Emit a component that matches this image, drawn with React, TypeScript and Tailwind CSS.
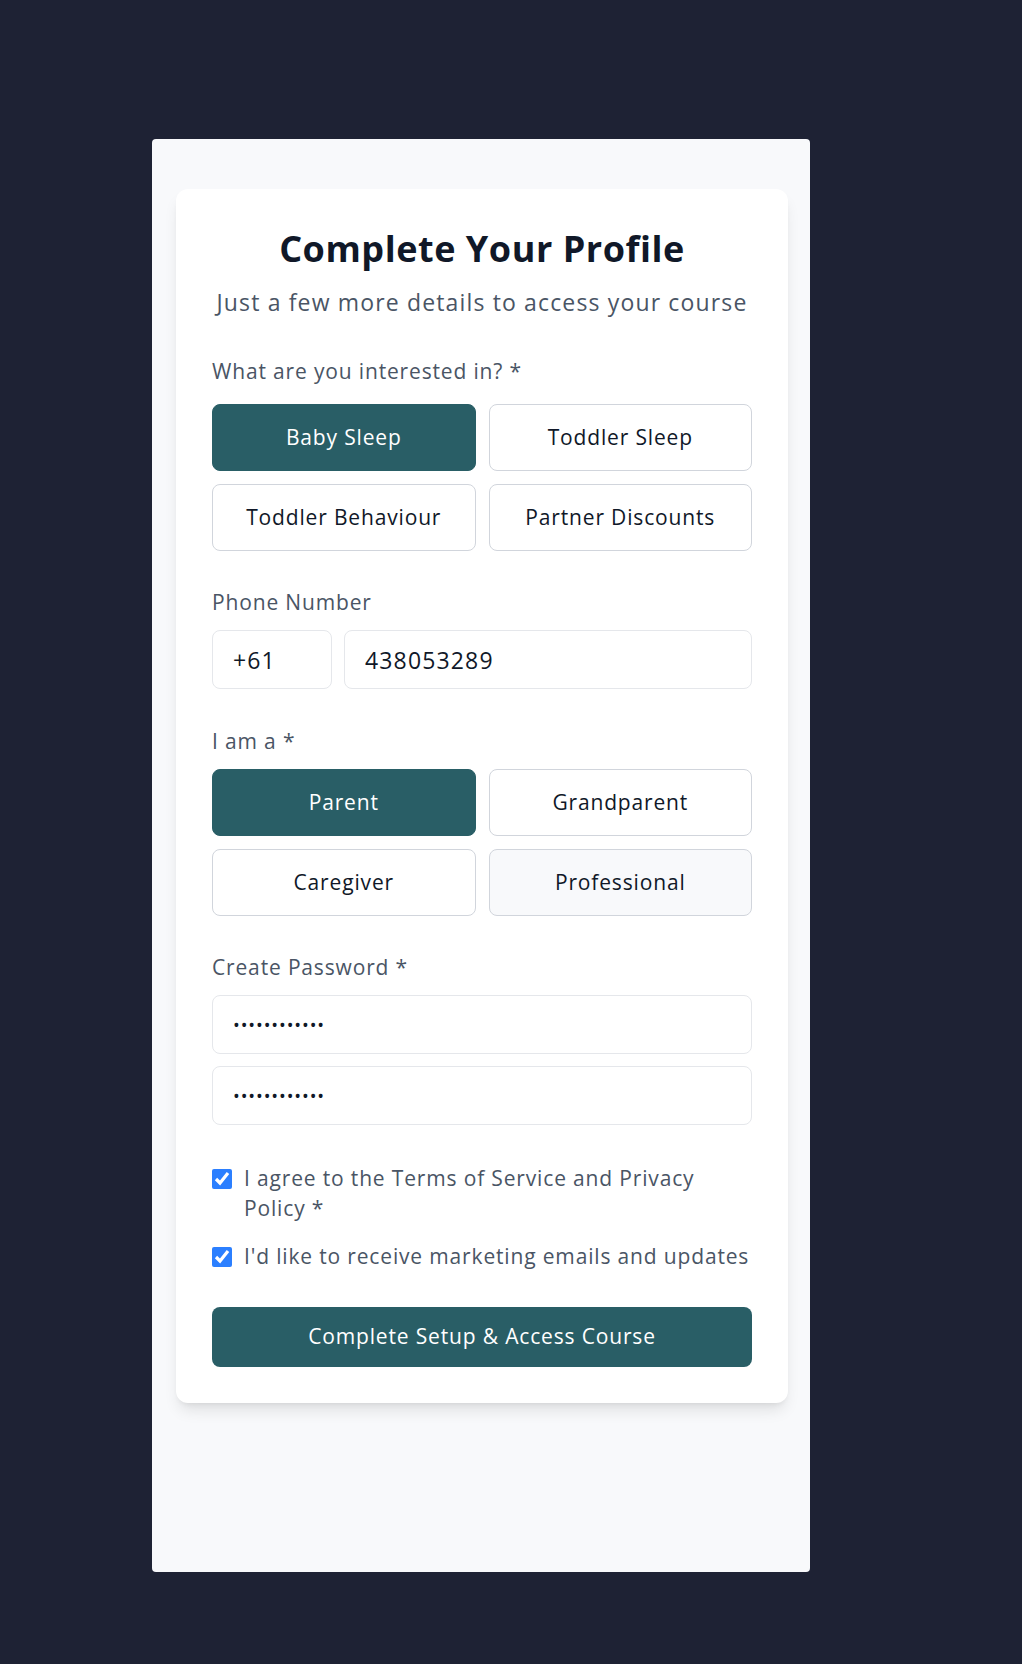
import { useState } from 'react';

const interests = ['Baby Sleep', 'Toddler Sleep', 'Toddler Behaviour', 'Partner Discounts'];
const roles = ['Parent', 'Grandparent', 'Caregiver', 'Professional'];

function OptionButton({ label, active, muted }: { label: string; active: boolean; muted?: boolean }) {
  return (
    <button
      type="button"
      className={
        active
          ? 'h-[67px] rounded-lg bg-[#295e66] text-white text-[21px] tracking-[0.04em] font-medium border border-[#295e66]'
          : muted
          ? 'h-[67px] rounded-lg bg-[#f8f9fb] text-gray-900 text-[21px] tracking-[0.04em] font-medium border border-gray-300'
          : 'h-[67px] rounded-lg bg-white text-gray-900 text-[21px] tracking-[0.04em] font-medium border border-gray-300'
      }
    >
      {label}
    </button>
  );
}

export default function App() {
  const [interest] = useState('Baby Sleep');
  const [role] = useState('Parent');

  return (
    <div className="min-h-screen bg-[#1e2234] pt-[139px] pl-[152px] font-['Open_Sans',sans-serif]">
      <div className="w-[658px] h-[1433px] bg-[#f8f9fb] rounded-[4px] pl-6 pr-[22px] pt-[50px]">
        <div className="bg-white rounded-xl shadow-lg px-9 pt-[40px] pb-9">
          <h1 className="text-center text-[36px] leading-[40px] font-bold tracking-[0.015em] text-gray-900">
            Complete Your Profile
          </h1>
          <p className="mt-[18px] text-center text-[23px] leading-[30px] tracking-[0.05em] text-gray-600">
            Just a few more details to access your course
          </p>

          <div className="mt-10">
            <label className="block text-[21px] leading-[28px] tracking-[0.04em] text-gray-600 mb-[19px]">
              What are you interested in? *
            </label>
            <div className="grid grid-cols-2 gap-[13px]">
              {interests.map((i) => (
                <OptionButton key={i} label={i} active={i === interest} />
              ))}
            </div>
          </div>

          <div className="mt-[37px]">
            <label className="block text-[21px] leading-[28px] tracking-[0.04em] text-gray-600 mb-[14px]">Phone Number</label>
            <div className="flex gap-3">
              <input
                readOnly
                value="+61"
                className="w-[120px] h-[59px] rounded-lg border border-gray-200 px-5 text-[23px] tracking-[0.05em] text-gray-900 outline-none"
              />
              <input
                readOnly
                value="438053289"
                className="flex-1 min-w-0 h-[59px] rounded-lg border border-gray-200 px-5 text-[23px] tracking-[0.05em] text-gray-900 outline-none"
              />
            </div>
          </div>

          <div className="mt-[38px]">
            <label className="block text-[21px] leading-[28px] tracking-[0.04em] text-gray-600 mb-[14px]">I am a *</label>
            <div className="grid grid-cols-2 gap-[13px]">
              {roles.map((r) => (
                <OptionButton key={r} label={r} active={r === role} muted={r === 'Professional'} />
              ))}
            </div>
          </div>

          <div className="mt-[37px]">
            <label className="block text-[21px] leading-[28px] tracking-[0.04em] text-gray-600 mb-[14px]">
              Create Password *
            </label>
            <div className="flex flex-col gap-3">
              <input
                readOnly
                type="password"
                value="abcdefghijkl"
                className="w-full h-[59px] rounded-lg border border-gray-200 px-5 text-[18px] tracking-[0.05em] text-gray-900 outline-none"
              />
              <input
                readOnly
                type="password"
                value="abcdefghijkl"
                className="w-full h-[59px] rounded-lg border border-gray-200 px-5 text-[18px] tracking-[0.05em] text-gray-900 outline-none"
              />
            </div>
          </div>

          <div className="mt-[38px] flex flex-col gap-[18px]">
            <label className="flex items-start gap-3 text-[21px] leading-[30px] tracking-[0.04em] text-gray-600">
              <input type="checkbox" defaultChecked className="mt-[6px] w-5 h-5 shrink-0 accent-blue-500" />
              <span>I agree to the Terms of Service and Privacy Policy *</span>
            </label>
            <label className="flex items-start gap-3 text-[21px] leading-[30px] tracking-[0.04em] text-gray-600">
              <input type="checkbox" defaultChecked className="mt-[6px] w-5 h-5 shrink-0 accent-blue-500" />
              <span>I'd like to receive marketing emails and updates</span>
            </label>
          </div>

          <button
            type="button"
            className="mt-9 w-full h-[60px] rounded-lg bg-[#295e66] text-white text-[21px] tracking-[0.04em] font-medium"
          >
            Complete Setup &amp; Access Course
          </button>
        </div>
      </div>
    </div>
  );
}
